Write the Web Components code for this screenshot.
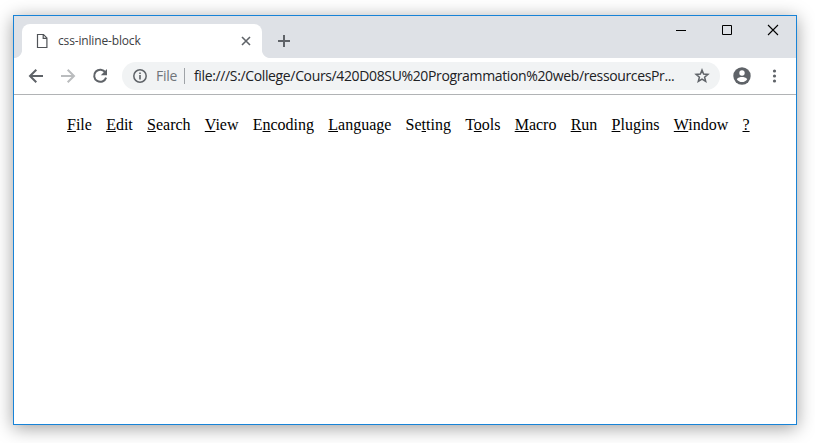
<!DOCTYPE html>
<html lang="en">
<head>
<meta charset="utf-8">
<title>css-inline-block</title>
<style>
html,body{margin:0;height:100%;overflow:hidden;background:#fff}
body{box-sizing:border-box;padding:15px 18px 18px 13px}
</style>
</head>
<body>
<browser-window>
  <tab-strip slot="tabs"><browser-tab>css-inline-block</browser-tab></tab-strip>
  <tool-bar slot="tools"><address-bar scheme="File">file:///S:/College/Cours/420D08SU%20Programmation%20web/ressourcesPr...</address-bar></tool-bar>
  <menu-bar>
    <menu-entry><u>F</u>ile</menu-entry>
    <menu-entry><u>E</u>dit</menu-entry>
    <menu-entry><u>S</u>earch</menu-entry>
    <menu-entry><u>V</u>iew</menu-entry>
    <menu-entry>E<u>n</u>coding</menu-entry>
    <menu-entry><u>L</u>anguage</menu-entry>
    <menu-entry>Se<u>t</u>ting</menu-entry>
    <menu-entry>T<u>o</u>ols</menu-entry>
    <menu-entry><u>M</u>acro</menu-entry>
    <menu-entry><u>R</u>un</menu-entry>
    <menu-entry><u>P</u>lugins</menu-entry>
    <menu-entry><u>W</u>indow</menu-entry>
    <menu-entry><u>?</u></menu-entry>
  </menu-bar>
</browser-window>
<script>
const define = (name, html) => customElements.define(name, class extends HTMLElement {
  constructor() {
    super();
    this.attachShadow({ mode: 'open' }).innerHTML = html;
  }
  connectedCallback() {
    const scheme = this.shadowRoot.querySelector('.scheme');
    if (scheme) scheme.textContent = this.getAttribute('scheme');
  }
});

define('menu-entry', `<style>:host{display:block;white-space:nowrap}</style><slot></slot>`);

define('menu-bar', `<style>
:host{display:flex;gap:14.23px;padding:21px 0 0 53px;font:16px/18px "Liberation Serif",serif;color:#000}
</style><slot></slot>`);

define('browser-tab', `<style>
:host{display:flex;align-items:center;box-sizing:border-box;width:240px;height:34px;padding:0 10px 0 14px;
 background:#fff;border-radius:8px 8px 0 0;position:relative;font:12px/16px "Open Sans","Noto Sans",sans-serif;color:#3c4043}
:host::before,:host::after{content:"";position:absolute;bottom:0;width:8px;height:8px}
:host::before{left:-8px;background:radial-gradient(circle at 0 0,#dee1e6 7.6px,#fff 8.4px)}
:host::after{right:-8px;background:radial-gradient(circle at 100% 0,#dee1e6 7.6px,#fff 8.4px)}
.name{margin-left:10px;flex:1;letter-spacing:-.16px}
svg{display:block}
</style>
<svg width="12" height="16" viewBox="0 0 12 16" fill="none" stroke="#505357" stroke-width="1.2"><path d="M1.5 1.5h6l3.4 3.4v9.6H1.5zM7.2 1.5v3.8h3.7"/></svg>
<span class="name"><slot></slot></span>
<svg width="12" height="12" viewBox="0 0 12 12" stroke="#5f6368" stroke-width="1.6"><path d="M2 2l8 8M10 2l-8 8"/></svg>`);

define('tab-strip', `<style>
:host{display:flex;height:42px;background:#dee1e6;padding-left:8px}
.tabs{padding-top:8px}
.new{margin:19px 0 0 16px}
.controls{display:flex;margin-left:auto;padding-right:16px}
.controls svg{display:block;margin-left:32px;margin-top:7px}
</style>
<div class="tabs"><slot></slot></div>
<svg class="new" width="12" height="12" viewBox="0 0 12 12" stroke="#5f6368" stroke-width="2"><path d="M6 0v12M0 6h12"/></svg>
<div class="controls">
<svg width="14" height="14" viewBox="0 0 14 14" stroke="#000"><path d="M2 7.5h10"/></svg>
<svg width="14" height="14" viewBox="0 0 14 14" stroke="#000" fill="none"><path d="M2.5 2.5h9v9h-9z"/></svg>
<svg width="14" height="14" viewBox="0 0 14 14" stroke="#000" stroke-width="1.1"><path d="M2 2l10 10M12 2L2 12"/></svg>
</div>`);

define('address-bar', `<style>
:host{display:flex;align-items:center;box-sizing:border-box;width:598px;height:28px;border-radius:14px;background:#f1f3f4;
 padding:0 10px;font:14px/20px "Open Sans","Noto Sans",sans-serif;color:#202124;white-space:nowrap}
svg{display:block;flex:none}
.scheme{width:28px;margin-left:8px;color:#70757a;letter-spacing:-.3px}
.rule{width:1px;height:16px;background:#9fa3a7;flex:none}
.url{margin-left:9px;flex:1;letter-spacing:-.36px}
</style>
<svg width="16" height="16" viewBox="0 0 16 16"><circle cx="8" cy="8" r="6.2" fill="none" stroke="#5f6368" stroke-width="1.5"/><path d="M7.2 4.5h1.6v1.6H7.2zM7.2 7.1h1.6v4.5H7.2z" fill="#5f6368"/></svg>
<span class="scheme"></span><span class="rule"></span><span class="url"><slot></slot></span>
<svg width="16" height="16" viewBox="0 0 16 16" fill="none" stroke="#5f6368" stroke-width="1.5"><path d="M8 2.100L9.600 6.100 13.900 6.400 10.600 9.200 11.700 13.400 8 11.100 4.300 13.400 5.400 9.200 2.100 6.400 6.400 6.100z"/></svg>`);

define('tool-bar', `<style>
:host{display:flex;align-items:center;height:36px;background:#fff;border-bottom:1px solid #b1b3b5;padding-left:12px;color:#5f6368}
svg{display:block;flex:none}
.nav{display:flex;gap:12px;margin-right:12px}
.profile{margin-left:12px}.more{margin-left:12px}
</style>
<div class="nav">
<svg width="20" height="20" viewBox="0 0 20 20" fill="none" stroke="#5f6368" stroke-width="2"><path d="M17 10H4.500M10.300 3.700L4 10l6.300 6.300"/></svg>
<svg width="20" height="20" viewBox="0 0 20 20" fill="none" stroke="#babcbe" stroke-width="2"><path d="M3 10h12.500M9.700 3.700L16 10l-6.300 6.300"/></svg>
<svg width="20" height="20" viewBox="0 0 20 20"><path d="M15.400 6.400A6.100 6.100 0 1 0 16.100 11.600" fill="none" stroke="#5f6368" stroke-width="2"/><path d="M17 3v6.200h-6.200z" fill="#5f6368"/></svg>
</div>
<slot></slot>
<svg class="profile" width="20" height="20" viewBox="0 0 20 20"><circle cx="10" cy="10" r="8.700" fill="#5f6368"/><circle cx="10" cy="7" r="2.700" fill="#fff"/><path d="M4.800 13.200C6 11.200 8.200 10.900 10 10.900s4 .3 5.200 2.300c-1.200 1.700-3 2.900-5.200 2.900s-4-1.200-5.200-2.900z" fill="#fff"/></svg>
<svg class="more" width="20" height="20" viewBox="0 0 20 20" fill="#5f6368"><circle cx="10.500" cy="5" r="1.600"/><circle cx="10.500" cy="10" r="1.600"/><circle cx="10.500" cy="15" r="1.600"/></svg>`);

define('browser-window', `<style>
:host{display:flex;flex-direction:column;box-sizing:border-box;height:410px;border:1px solid #1883d7;background:#fff;
 box-shadow:0 3px 17px rgba(0,0,0,.38)}
</style><slot name="tabs"></slot><slot name="tools"></slot><slot></slot>`);
</script>
</body>
</html>
